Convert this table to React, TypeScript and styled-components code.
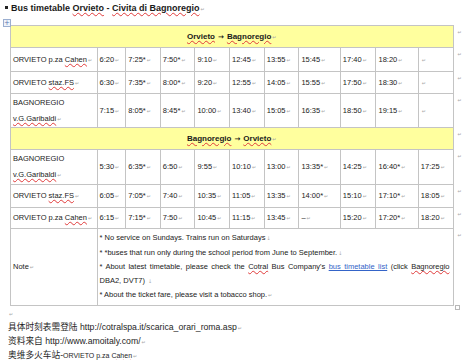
import styled, { createGlobalStyle } from 'styled-components';

const GlobalStyle = createGlobalStyle`
  body {
    margin: 0;
    background: #ffffff;
    color: #222222;
    font-family: "Liberation Sans", Arial, "Noto Sans CJK SC", sans-serif;
  }
`;

type Row = { stop: React.ReactNode; times: string[]; h: number };

const Spell = styled.span`
  text-decoration: underline wavy #e03a3a;
  text-decoration-thickness: 1px;
  text-underline-offset: 1px;
`;

const Mark = styled.span`
  font-family: "DejaVu Sans", sans-serif;
  font-size: 5px;
  font-weight: normal;
  color: #a8a8a8;
  margin-left: 1px;
`;

const colWidths = [87, 29, 35, 35, 35, 35, 35, 42, 36, 43, 35];

const outbound: Row[] = [
  { stop: <>ORVIETO p.za <Spell>Cahen</Spell></>, times: ['6:20', '7:25*', '7:50*', '9:10', '12:45', '13:55', '15:45', '17:40', '18:20', ''], h: 24 },
  { stop: <>ORVIETO <Spell>staz.FS</Spell></>, times: ['6:30', '7:35*', '8:00*', '9:20', '12:55', '14:05', '15:55', '17:50', '18:30', ''], h: 22 },
  { stop: <>BAGNOREGIO<br /><Spell>v.G.Garibaldi</Spell></>, times: ['7:15', '8:05*', '8:45*', '10:00', '13:40', '15:05', '16:35', '18:50', '19:15', ''], h: 34 },
];

const inbound: Row[] = [
  { stop: <>BAGNOREGIO<br /><Spell>v.G.Garibaldi</Spell></>, times: ['5:30', '6:35*', '6:50', '9:55', '10:10', '13:00', '13:35*', '14:25', '16:40*', '17:25'], h: 35 },
  { stop: <>ORVIETO <Spell>staz.FS</Spell></>, times: ['6:05', '7:05*', '7:40', '10:35', '11:05', '13:35', '14:00*', '15:10', '17:10*', '18:05'], h: 23 },
  { stop: <>ORVIETO p.za <Spell>Cahen</Spell></>, times: ['6:15', '7:15*', '7:50', '10:45', '11:15', '13:45', '\u2013', '15:20', '17:20*', '18:20'], h: 21 },
];

const Page = styled.div`
  width: 466px;
  height: 360px;
  overflow: hidden;
`;

const Title = styled.div`
  padding-left: 4px;
  height: 16px;
  line-height: 16px;
  font-size: 9px;
  font-weight: bold;
  color: #1a1a1a;
`;

const Bullet = styled.span`
  display: inline-block;
  width: 3px;
  height: 3px;
  background: #222;
  margin: 0 3px 2px 1px;
  vertical-align: middle;
`;

const TableWrap = styled.div`
  position: relative;
  margin: 9px 0 0 10px;
  width: 456px;
`;

const MoveHandle = styled.div`
  position: absolute;
  left: -7px;
  top: -6px;
  width: 6px;
  height: 6px;
  border: 1px solid #9aaed0;
  background: #eef3fb;
  color: #5a78b0;
  font-size: 7px;
  line-height: 6px;
  text-align: center;
  font-family: "DejaVu Sans", sans-serif;
`;

const ResizeHandle = styled.div`
  position: absolute;
  left: 445px;
  bottom: -4px;
  width: 3px;
  height: 3px;
  border: 1px solid #b8b8b8;
  background: #fff;
`;

const Grid = styled.table`
  border-collapse: collapse;
  table-layout: fixed;
  font-size: 7.5px;
`;

const Tr = styled.tr<{ $h: number }>`
  height: ${(p) => p.$h}px;
`;

const Cell = styled.td`
  border: 1px solid #c4c4c4;
  padding: 0 2px;
  vertical-align: middle;
  line-height: 15px;
  white-space: nowrap;
  overflow: hidden;
`;

const HeadCell = styled(Cell)`
  background: #ffff9e;
  text-align: center;
  font-weight: bold;
  font-size: 8px;
  color: #1a1a1a;
`;

const StopCell = styled(Cell)`
  line-height: 16px;
`;

const NoteCell = styled(Cell)`
  white-space: normal;
  padding: 2px 3px 2px 2px;
  line-height: 13.6px;
  text-align: justify;
`;

const NoteLine = styled.div<{ $fill?: boolean }>`
  text-align-last: ${(p) => (p.$fill ? 'justify' : 'auto')};
  white-space: nowrap;
`;

const RowEnd = styled.td`
  border: none;
  width: 9px;
  padding: 3px 0 0 3px;
  vertical-align: top;
  line-height: 6px;
`;

const LinkText = styled.span`
  color: #3464c8;
  text-decoration: underline;
`;

const After = styled.div`
  margin-top: 1px;
  padding-left: 8px;
  font-size: 8.7px;
  line-height: 13px;
  color: #1e1e1e;
`;

const Small = styled.span`
  font-size: 7px;
`;

const Arrow = styled.span`
  font-family: "DejaVu Sans", sans-serif;
  font-size: 7px;
  margin: 0 3px;
`;

function TimeRow({ row }: { row: Row }) {
  return (
    <Tr $h={row.h}>
      <StopCell>
        {row.stop}
        <Mark>↵</Mark>
      </StopCell>
      {row.times.map((t, i) => (
        <Cell key={i}>
          {t}
          <Mark>↵</Mark>
        </Cell>
      ))}
      <RowEnd>
        <Mark>↵</Mark>
      </RowEnd>
    </Tr>
  );
}

function Heading({ from, to }: { from: string; to: string }) {
  return (
    <Tr $h={22}>
      <HeadCell colSpan={11}>
        <Spell>{from}</Spell>
        <Arrow>→</Arrow>
        <Spell>{to}</Spell>
        <Mark>↵</Mark>
      </HeadCell>
      <RowEnd>
        <Mark>↵</Mark>
      </RowEnd>
    </Tr>
  );
}

export default function App() {
  return (
    <Page>
      <GlobalStyle />
      <Title>
        <Bullet />
        Bus timetable <Spell>Orvieto</Spell> - <Spell>Civita di Bagnoregio</Spell>
        <Mark>↵</Mark>
      </Title>
      <TableWrap>
        <MoveHandle>+</MoveHandle>
        <Grid>
          <colgroup>
            {colWidths.map((w, i) => (
              <col key={i} style={{ width: w }} />
            ))}
            <col style={{ width: 9 }} />
          </colgroup>
          <tbody>
            <Heading from="Orvieto" to="Bagnoregio" />
            {outbound.map((r, i) => (
              <TimeRow key={'o' + i} row={r} />
            ))}
            <Heading from="Bagnoregio" to="Orvieto" />
            {inbound.map((r, i) => (
              <TimeRow key={'i' + i} row={r} />
            ))}
            <Tr $h={75}>
              <Cell>
                Note<Mark>↵</Mark>
              </Cell>
              <NoteCell colSpan={10}>
                <NoteLine>* No service on Sundays. Trains run on Saturdays<Mark>↓</Mark></NoteLine>
                <NoteLine>* *buses that run only during the school period from June to September.<Mark>↓</Mark></NoteLine>
                <NoteLine $fill>
                  * About latest timetable, please check the <Spell>Cotral</Spell> Bus Company's{' '}
                  <LinkText>bus timetable list</LinkText> (click <Spell>Bagnoregio</Spell>
                </NoteLine>
                <NoteLine>DBA2, DVT7) <Mark>↓</Mark></NoteLine>
                <NoteLine>* About the ticket fare, please visit a tobacco shop.<Mark>↵</Mark></NoteLine>
              </NoteCell>
              <RowEnd>
                <Mark>↵</Mark>
              </RowEnd>
            </Tr>
          </tbody>
        </Grid>
        <ResizeHandle />
      </TableWrap>
      <After>
        <div>
          <Mark>↵</Mark>
        </div>
        <div>
          具体时刻表需登陆 http://cotralspa.it/scarica_orari_roma.asp<Mark>↵</Mark>
        </div>
        <div>
          资料来自 http://www.amoitaly.com/<Mark>↵</Mark>
        </div>
        <div>
          奥维多火车站-<Small>ORVIETO p.za <Spell>Cahen</Spell></Small>
          <Mark>↵</Mark>
        </div>
      </After>
    </Page>
  );
}
